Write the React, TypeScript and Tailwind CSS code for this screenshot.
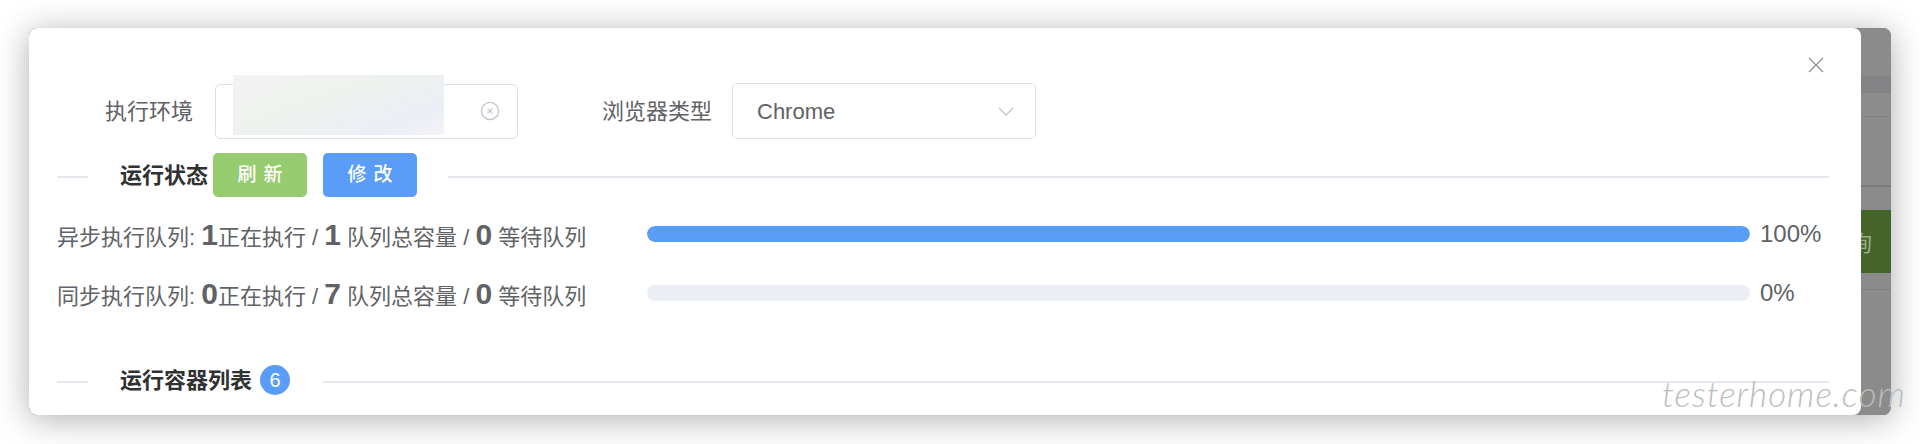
import React from "react";

const rows = [
  { name: "异步执行队列", running: 1, total: 1, waiting: 0, pct: 100 },
  { name: "同步执行队列", running: 0, total: 7, waiting: 0, pct: 0 },
];

function Divider({ children, className }: { children: React.ReactNode; className?: string }) {
  return (
    <div className={"flex items-center " + (className || "")}>
      <div className="w-[31px] h-[2px] mt-[3px] bg-[#e4e7ed] shrink-0" />
      {children}
      <div className="flex-1 h-[2px] mt-[3px] bg-[#e4e7ed]" />
    </div>
  );
}

export default function App() {
  return (
    <div className="relative w-[1920px] h-[444px] overflow-hidden bg-white pt-[28px] pl-[29px] font-['Liberation_Sans','Noto_Sans_CJK_SC',sans-serif] text-[#606266]">
      <div className="flex w-[1862px] h-[387px] rounded-[8px] overflow-hidden bg-[#8b8b8b] shadow-[0_4px_34px_rgba(0,0,0,0.32)]">
        {/* modal */}
        <div className="relative z-10 flex flex-col w-[1832px] h-full shrink-0 rounded-[8px] bg-white pt-[55px] pl-[28px] pr-[32px]">
          <button className="absolute top-[29px] right-[37px] w-[16px] h-[16px]">
            <svg width="16" height="16" viewBox="0 0 16 16">
              <path d="M1 1L15 15M15 1L1 15" stroke="#909399" strokeWidth="1.4" />
            </svg>
          </button>

          {/* form row */}
          <div className="flex items-center h-[56px]">
            <div className="w-[158px] pr-[22px] text-right text-[22px]">执行环境</div>
            <div className="relative w-[303px] h-[55px] rounded-[5px] border-[1.5px] border-[#dcdfe6] flex items-center justify-end pr-[17px]">
              <div className="absolute left-[17px] -top-[10px] w-[211px] h-[60px] bg-[linear-gradient(160deg,#f2f2f2_0%,#eef2ee_45%,#eceef6_80%,#f3f4f7_100%)]" />
              <svg width="20" height="20" viewBox="0 0 20 20">
                <circle cx="10" cy="10" r="8.6" stroke="#c0c4cc" strokeWidth="1.3" fill="none" />
                <path d="M7.6 7.6L12.4 12.4M12.4 7.6L7.6 12.4" stroke="#c0c4cc" strokeWidth="1.3" />
              </svg>
            </div>
            <div className="ml-[56px] w-[158px] pr-[20px] text-right text-[22px]">浏览器类型</div>
            <div className="w-[304px] h-[56px] rounded-[5px] border-[1.5px] border-[#dcdfe6] flex items-center justify-between pl-[24px] pr-[21px]">
              <span className="text-[22px] text-[#606266]">Chrome</span>
              <svg width="16" height="9" viewBox="0 0 16 9">
                <path d="M1 1L8 8L15 1" stroke="#c0c4cc" strokeWidth="1.3" fill="none" />
              </svg>
            </div>
          </div>

          {/* 运行状态 */}
          <Divider className="h-[44px] mt-[14px]">
            <div className="flex items-center pl-[32px] pr-[31px]">
              <span className="text-[22px] font-semibold text-[#303133]">运行状态</span>
              <button className="ml-[5px] w-[94px] h-[44px] rounded-[5px] bg-[#97cb70] text-white text-[19px] font-medium tracking-[7px] pl-[7px]">
                刷新
              </button>
              <button className="ml-[16px] w-[94px] h-[44px] rounded-[5px] bg-[#5a9df8] text-white text-[19px] font-medium tracking-[7px] pl-[7px]">
                修改
              </button>
            </div>
          </Divider>

          {/* queues */}
          <div className="flex flex-col gap-[19px] mt-[17px]">
            {rows.map((r) => (
              <div key={r.name} className="flex items-center h-[40px]">
                <div className="w-[590px] shrink-0 whitespace-nowrap text-[22px]">
                  <span>{r.name}: </span>
                  <span className="text-[30px] font-bold">{r.running}</span>
                  <span>正在执行 / </span>
                  <span className="text-[30px] font-bold">{r.total}</span>
                  <span> 队列总容量 / </span>
                  <span className="text-[30px] font-bold">{r.waiting}</span>
                  <span> 等待队列</span>
                </div>
                <div className="flex-1 h-[16px] rounded-full bg-[#ebeef5] overflow-hidden">
                  <div className="h-full rounded-full bg-[#589ef8]" style={{ width: `${r.pct}%` }} />
                </div>
                <div className="w-[79px] shrink-0 pl-[10px] text-[24px]">{r.pct}%</div>
              </div>
            ))}
          </div>

          {/* 运行容器列表 */}
          <Divider className="h-[32px] mt-[51px]">
            <div className="flex items-center pl-[32px] pr-[33px]">
              <span className="text-[22px] font-semibold text-[#303133]">运行容器列表</span>
              <span className="ml-[8px] w-[30px] h-[30px] rounded-full bg-[#5a9df8] text-white text-[20px] flex items-center justify-center">
                6
              </span>
            </div>
          </Divider>
        </div>

        {/* dimmed page behind */}
        <div className="flex-1 flex flex-col">
          <div className="h-[48px] bg-[#8b8b8b]" />
          <div className="h-[17px] bg-[#838386]" />
          <div className="h-[23px] bg-[#8d8d8d]" />
          <div className="h-[1px] bg-[#828282]" />
          <div className="h-[68px] bg-[#8b8b8b]" />
          <div className="h-[2px] bg-[#7c7c80]" />
          <div className="h-[23px] bg-[#8b8b8b]" />
          <div className="h-[63px] bg-[#44652a] overflow-hidden flex items-center">
            <span className="-ml-[11px] text-[22px] text-[#9cad8c] font-['Noto_Sans_CJK_SC',sans-serif]">询</span>
          </div>
          <div className="h-[16px] bg-[#8b8b8b]" />
          <div className="h-[1px] bg-[#808080]" />
          <div className="flex-1 bg-[#8b8b8b]" />
        </div>
      </div>

      <div className="absolute z-20 left-[1662px] top-[376px] whitespace-nowrap text-[35px] leading-none font-light italic text-[#bcbcbc] tracking-[1px] font-['Lato','DejaVu_Sans',sans-serif] pointer-events-none">
        testerhome.com
      </div>
    </div>
  );
}
